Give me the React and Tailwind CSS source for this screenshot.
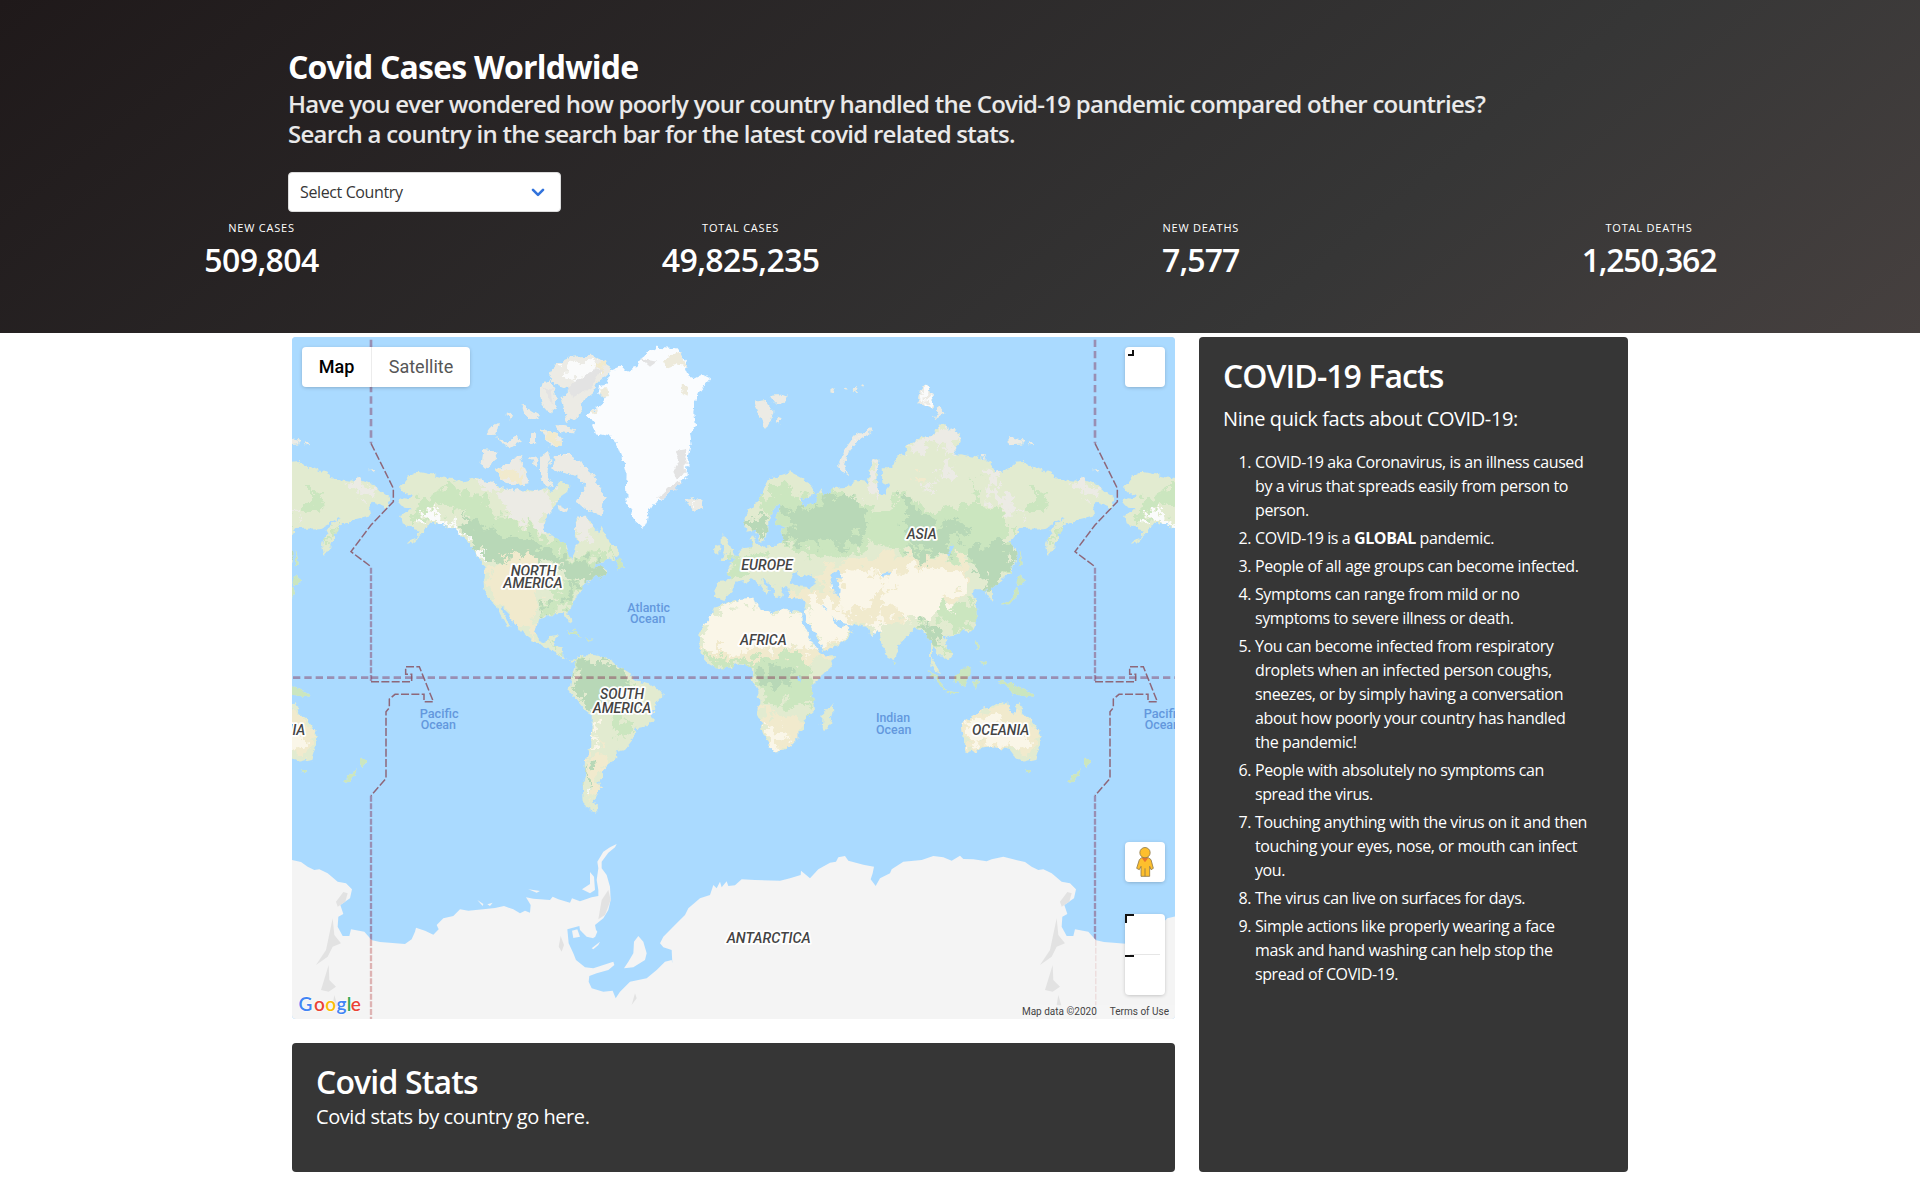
const shape = (dx, dy, list) =>
  list
    .split("|")
    .map(
      (ring) =>
        "M" +
        ring
          .trim()
          .split(/\s+/)
          .map((p) => {
            const [x, y] = p.split(",").map(Number);
            return `${x + dx},${y + dy}`;
          })
          .join("L") +
        "Z"
    )
    .join("");

const northAmerica = shape(
  0,
  0,
  `355,528 372,520 390,522 395,510 372,500 357,487 368,478 385,455 415,440 450,448 480,455 520,462 545,470 575,462 590,458 610,468 640,475 660,490 690,492 705,500 730,492 770,495 790,490 815,500 830,480 845,470 868,480 860,505 838,520 825,545 800,570 790,600 795,620 825,640 862,662 866,685 873,702 882,690 893,655 885,625 892,600 888,575 910,572 935,585 940,610 958,625 968,605 978,635 988,655 1010,665 1020,690 1005,700 975,708 950,715 935,728 965,722 985,738 960,760 945,752 925,770 905,785 898,815 880,832 870,850 862,862 872,880 875,898 866,895 855,868 830,868 800,868 778,885 768,915 775,945 790,952 805,945 812,932 830,930 828,950 820,965 845,970 848,995 865,1008 888,1005 905,1020 870,1010 845,1000 828,980 800,965 775,955 745,940 722,920 705,895 685,865 665,845 668,865 695,908 680,900 660,870 650,842 625,820 612,790 610,760 615,730 605,712 590,690 575,660 560,645 540,630 525,615 495,600 470,590 450,600 435,605 425,630 400,650 383,656 395,645 412,635 420,620 400,615 385,605 365,595 360,570 385,560 395,548 370,545`
);

const southAmerica = shape(
  0,
  1005,
  `888,0 900,-12 935,-15 975,-8 1000,5 1020,20 1050,40 1058,55 1075,65 1115,75 1145,95 1142,115 1120,140 1118,175 1105,198 1070,205 1055,245 1035,270 1010,275 1012,298 985,315 970,330 968,350 958,370 962,385 945,405 940,425 955,448 945,458 920,445 908,420 905,385 915,350 918,300 930,260 935,200 935,165 915,150 890,120 868,90 875,60 880,30`
);

const africa = shape(
  1350,
  0,
  `-10,830 30,822 70,818 75,835 105,855 125,865 150,852 180,858 205,860 216,860 218,890 235,930 255,965 272,990 295,992 315,990 310,1010 285,1045 250,1075 240,1085 252,1125 255,1155 220,1185 222,1210 205,1220 205,1240 170,1275 130,1280 118,1260 100,1220 95,1195 80,1165 88,1135 85,1100 65,1065 70,1040 60,1025 40,1020 20,1018 -10,1030 -40,1030 -70,1012 -85,995 -92,965 -88,915 -60,875 -40,845|308,1135 310,1165 295,1210 282,1218 272,1205 275,1170 290,1155`
);

const eurasia = shape(
  1350,
  0,
  `-42,768 0,765 5,755 -10,735 0,720 15,690 40,672 65,665 62,640 72,635 78,655 95,665 140,662 155,650 160,635 155,615 180,605 160,605 140,600 138,570 155,545 152,530 130,550 115,590 115,620 100,650 85,645 75,615 50,620 40,605 45,570 70,545 90,515 100,485 125,460 180,442 215,460 250,490 258,510 230,520 210,515 225,545 260,530 262,510 275,490 285,515 310,490 350,485 380,468 415,475 415,450 428,405 445,408 440,460 445,505 455,515 480,480 457,470 455,430 470,430 490,420 500,395 530,385 525,365 570,340 615,325 625,300 645,292 650,310 690,325 692,350 670,385 730,395 775,405 800,440 850,430 852,410 880,408 915,430 970,445 975,462 1030,470 1060,460 1100,475 1125,500 1155,520 1140,545 1100,530 1090,550 1095,570 1040,585 1000,600 985,640 970,675 955,695 948,660 960,620 1000,580 945,610 870,612 850,640 835,655 855,670 857,700 845,740 815,765 785,790 787,835 775,820 765,790 740,790 725,805 740,830 743,880 725,915 680,925 655,930 640,950 655,965 665,990 645,1005 625,985 607,960 605,1000 620,1020 630,1050 610,1030 600,1000 600,950 585,930 575,915 555,910 530,935 505,960 490,1005 475,1000 455,960 447,915 425,930 410,905 380,900 340,895 320,890 303,868 310,890 330,905 350,900 368,920 345,950 277,980 268,950 245,910 228,885 222,860 228,825 200,820 175,815 170,800 180,788 155,785 155,820 140,815 130,785 95,760 100,775 120,795 108,810 90,780 65,760 45,770 20,775 5,800 -20,825 -45,815|-25,620 -10,640 0,665 15,690 0,705 -28,705 -15,680 -25,655|-48,665 -32,660 -32,688 -47,690`
);

const innerSeas = shape(
  1350,
  0,
  `180,770 195,740 215,757 240,745 262,775 235,786 200,784|300,750 330,738 338,752 318,768 332,790 330,818 312,808 308,780|455,745 480,738 478,748 460,754|648,690 668,655 672,665 655,690|275,838 292,855 286,858|198,1058 212,1055 208,1070`
);

const arcticIslands = shape(
  0,
  0,
  `805,150 830,115 880,95 940,92 990,125 985,145 950,175 940,200 900,235 905,265 880,285 860,290 850,240 845,215 870,195 850,185 820,175|790,175 810,165 825,210 830,250 810,265 785,235 780,200|605,420 610,375 650,380 655,400 620,430|645,435 690,410 720,390 730,420 740,440 745,475 700,480 665,465|820,430 825,390 870,390 895,410 940,450 960,490 980,515 970,535 965,570 920,555 890,530 905,505 920,480 890,455 840,440|780,400 805,380 812,400 800,450 820,480 800,488 780,450|750,390 775,400 765,430|750,325 768,325 768,355 750,350|645,340 680,350 710,330 720,350 690,370|620,325 640,300 660,295 640,330|725,240 755,260 780,275 760,285 735,270|830,300 885,310 880,325 835,320|680,268 697,263 690,290|780,310 830,325 845,340 845,365 805,360|835,540 865,550 860,560 840,555|1215,525 1240,520 1270,525 1268,545 1245,560 1225,545`
);

const northernIslands = shape(
  1350,
  0,
  `75,230 110,225 130,260 120,290 108,312 95,280 85,265|120,210 145,208 170,215 160,235 130,235|140,275 155,280 150,295 138,290|298,206 317,188 310,204|338,182 356,190 345,195|368,200 382,188 380,200|392,182 400,176 402,190|325,430 345,370 370,335 420,312 425,320 380,350 352,385 345,420 353,445|570,195 585,175 600,195 610,235 608,255 580,240 565,225|625,240 643,262 613,280|838,335 880,345 880,358 840,360|895,350 915,358 900,362|1090,437 1108,435 1100,443|755,390 770,390 765,402`
);

const smallIslands = shape(
  0,
  0,
  `860,915 895,925 905,935 875,925|915,938 942,942 925,947|1010,705 1020,698 1035,725 1008,730`
) + shape(
  1350,
  0,
  `870,675 878,715 866,728|862,750 885,768 868,782 860,772|862,790 862,820 840,838 812,838 845,820 855,790|738,945 746,960 740,975|755,1005 770,1010 765,1022|490,1008 500,1010 497,1020|590,1030 632,1068 652,1095 628,1080|650,1098 690,1103 688,1107 655,1103|670,1050 700,1035 715,1020 722,1035 720,1050 705,1083 675,1070|730,1072 748,1062 740,1090 732,1090|805,1065 850,1078 895,1098 912,1118 880,1113 845,1105 835,1085 810,1077|885,1330 900,1330 893,1347|1062,1298 1083,1308 1068,1330 1062,1315|1055,1333 1045,1350 1025,1373 1016,1367 1040,1340`
);

const australia = shape(
  1350,
  1005,
  `695,190 735,165 755,145 785,140 810,125 832,130 835,150 855,165 865,125 880,155 905,180 935,225 930,255 915,300 880,308 855,290 840,270 790,258 750,268 720,278 703,275 700,225`
);

const greenland = shape(
  0,
  0,
  `920,270 965,240 975,210 955,205 960,180 985,175 985,140 1020,125 1045,140 1075,120 1090,90 1130,65 1190,70 1220,110 1215,130 1230,165 1265,148 1290,160 1270,185 1250,210 1240,260 1245,305 1230,325 1235,360 1225,400 1220,440 1220,460 1185,490 1150,520 1125,530 1105,565 1100,595 1085,603 1060,580 1040,530 1038,480 1040,450 1030,410 1015,370 995,335 945,325 935,300 950,290 925,280`
);

const antarctica = shape(
  0,
  1005,
  `273,840 300,846 375,852 395,838 405,815 408,803 435,812 460,824 476,808 470,795 490,775 520,768 540,748 565,752 610,748 645,744 672,738 700,748 720,760 735,752 750,758 752,735 738,712 760,716 810,720 818,710 835,718 870,728 876,715 900,724 935,712 955,708 955,690 950,660 955,625 952,605 970,575 990,562 1010,552 1005,562 985,578 965,605 965,625 980,645 990,680 992,720 985,750 970,775 945,795 950,820 940,835 920,830 900,810 898,798 862,808 866,850 880,880 888,900 915,922 940,925 970,915 1000,905 1003,915 985,930 950,940 928,948 926,965 935,985 970,995 998,992 1007,1015 1020,995 1050,965 1100,955 1130,930 1155,905 1175,900 1177,910 1175,870 1150,862 1140,850 1150,830 1190,790 1215,765 1225,745 1260,715 1290,705 1300,675 1310,685 1320,665 1325,682 1340,664 1345,678 1365,676 1385,658 1425,660 1500,662 1530,655 1562,645 1563,632 1590,655 1615,628 1650,608 1668,605 1675,592 1695,588 1705,602 1750,614 1782,620 1778,640 1772,658 1787,678 1800,655 1830,640 1835,628 1870,605 1925,600 1960,588 1990,592 2015,602 2040,587 2050,597 2080,598 2120,604 2135,598 2170,590 2200,598 2235,606 2255,620 2275,630 2290,628 2315,640 2345,665 2370,670 2388,688 2382,715 2353,735 2362,762 2347,770 2345,800 2360,828 2380,828 2385,808 2425,815 2447,840 2447,1120 271,1120 271,840|1075,828 1090,845 1100,880 1095,900 1060,922 1032,925 1045,905 1060,880 1062,845|930,636 942,650 945,690 930,700 906,688 930,672|876,812 892,808 900,830 880,834|900,800 940,798 952,815 945,832 925,832|935,865 960,845 955,855 940,868|745,688 780,693 770,698|592,720 610,732 608,738|622,733 638,728 630,738`
);

const antarcticRelief = shape(
  0,
  1005,
  `2362,696 2375,700 2368,725 2345,740 2340,725|2330,775 2335,825 2355,850 2330,860 2315,890 2280,915 2310,870|2318,915 2320,960 2340,980 2318,995 2295,990|2335,1005 2345,1040 2330,1035|965,720 985,690 992,720 975,765 955,778|842,828 852,855 845,875 836,860|1065,1000 1070,1015 1055,1035`
);

const tundra = shape(
  0,
  0,
  `660,492 730,488 815,500 840,518 800,570 790,620 740,605 700,580 670,545|885,570 935,580 945,640 900,660|525,530 580,535 605,575 590,600 550,570|820,385 900,400 980,515 965,570 900,530 920,480 830,440|580,460 640,472 665,490 640,505 600,490`
) + shape(1350, 0, `525,370 615,325 645,290 695,325 690,352 660,385 625,355 570,388|610,430 665,415 675,445 620,475|780,440 805,440 790,490 830,525 870,550 885,590 850,560 790,540 770,500|1030,470 1060,460 1105,480 1100,530 1060,500|425,400 448,405 440,520 420,495|580,500 615,475 605,515|320,440 420,310 430,320 350,450`);

const midGreen = shape(
  0,
  0,
  `395,555 455,500 520,485 600,520 650,560 740,610 830,650 870,700 960,690 1020,675 1000,705 900,745 830,720 700,650 600,620 540,560 460,545 400,600|780,850 850,770 900,770 890,830 800,870|800,935 830,965 860,1005 820,975|890,995 1050,1040 1060,1100 900,1130|985,1170 1060,1200 1070,1240 1000,1230`
) + shape(
  1350,
  0,
  `90,520 150,480 230,510 320,500 450,560 520,500 600,560 720,540 830,560 840,610 840,740 780,770 720,700 540,690 430,650 360,690 200,680 120,600|0,700 60,670 120,690 60,740 10,750|620,840 740,830 745,880 690,920 640,890|570,890 640,950 660,1000 600,960|-80,990 60,1010 200,980 250,1060 250,1150 100,1130 60,1030 -40,1030|740,470 760,540 730,540|900,490 960,520 930,560 900,540|950,640 990,600 975,670`
);

const darkGreen = shape(
  0,
  0,
  `535,580 610,590 650,620 720,650 790,660 860,710 950,705 985,740 900,770 840,730 720,680 690,690 640,720 600,680 560,630|785,840 805,835 800,865|840,820 890,770 895,790 850,840|905,1010 960,1000 1000,1020 1050,1045 1055,1075 990,1110 940,1160 890,1120 880,1070|920,1310 932,1310 928,1370 912,1390`
) + shape(
  1350,
  0,
  `140,540 230,550 300,520 370,515 390,560 415,590 380,620 400,650 370,670 300,650 200,655 150,630 200,600|525,500 550,540 600,580 700,600 720,620 660,640 660,690 620,690 540,640 525,570|730,660 840,655 855,700 820,750 770,800 760,760 720,710|70,1030 200,1020 200,1060 100,1090|575,880 620,920 640,960 600,950|680,1040 715,1025 705,1060 685,1070|50,590 80,560 110,590 90,640|840,1085 890,1095 880,1108|530,660 600,680 590,710 540,690`
);

const tan = shape(
  0,
  0,
  `620,740 700,670 780,690 770,880 760,940 720,910 640,830|650,430 730,440 720,475 660,465|780,310 850,330 840,365 800,360|955,1260 970,1265 985,1300 950,1400 925,1440 930,1320|925,140 980,110 970,150|950,190 990,190 985,215`
) + shape(
  1350,
  0,
  `270,740 330,710 480,685 560,700 700,700 720,770 660,830 540,880 420,900 290,880 170,815 180,790 290,800|-90,960 60,960 290,975 300,1000 60,1010 -60,1000|85,1140 180,1180 240,1180 180,1280 120,1280|690,1200 760,1150 830,1140 870,1160 935,1230 900,1290 850,1280 700,1270|550,450 590,450 590,490 560,480|225,820 350,890 350,950 280,980`
);

const desert = shape(
  1350,
  0,
  `-90,930 -50,870 0,828 70,818 120,860 220,860 240,930 265,985 200,965 60,960 30,990 -20,975 -80,975|232,825 290,820 360,890 365,920 280,975 225,880|320,750 400,730 450,760 440,830 400,860 330,850|470,800 540,770 540,720 620,740 690,745 710,790 640,810 650,850 600,880 520,880 470,840|450,760 540,730 560,770 470,790|410,890 460,860 440,920|100,1200 160,1210 170,1250 130,1275|700,1200 790,1165 850,1200 900,1240 870,1285 800,1255 720,1265`
) + shape(0, 1005, `935,165 950,180 945,250 930,260|700,1070 705,1075 702,1078`);

const snow = shape(
  0,
  0,
  `430,575 465,555 500,590 545,610 575,640 560,640 520,615 470,585 435,598|600,670 615,690 605,705|850,345 875,345 870,368 848,365|845,130 930,105 960,130 880,170|915,1380 922,1380 920,1420 912,1415|1230,530 1255,525 1250,545`
) + shape(1350, 0, `570,190 590,180 600,240 585,235|350,370 410,318 380,345`);

const relief = shape(
  0,
  0,
  `1185,375 1215,370 1218,440 1190,460 1180,440 1195,410|860,190 930,140 970,130 930,190 880,220|790,190 815,190 820,240|1130,520 1190,470 1210,470 1150,520|1080,100 1130,110 1110,125`
);

const greenlandCoast = shape(0, 0, `1165,95 1205,85 1220,125 1190,118 1160,130 1150,120|960,190 985,190 990,210 965,212|930,262 955,250 945,268|1205,180 1225,180 1220,215 1210,210`);

const continents = northAmerica + southAmerica + africa + eurasia + arcticIslands + northernIslands + smallIslands + australia;

const labels = [
  { t: "NORTH", x: 692, y: 752, w: 138 },
  { t: "AMERICA", x: 670, y: 790, w: 178 },
  { t: "SOUTH", x: 960, y: 1121, w: 132 },
  { t: "AMERICA", x: 938, y: 1163, w: 176 },
  { t: "EUROPE", x: 1384, y: 736, w: 154 },
  { t: "ASIA", x: 1880, y: 643, w: 90 },
  { t: "AFRICA", x: 1380, y: 960, w: 140 },
  { t: "OCEANIA", x: 2076, y: 1231, w: 172 },
  { t: "ANTARCTICA", x: 1340, y: 1855, w: 252 },
];

const seas = [
  { t: "Atlantic", x: 1042, y: 861, w: 128 },
  { t: "Ocean", x: 1050, y: 894, w: 106 },
  { t: "Pacific", x: 419, y: 1180, w: 117 },
  { t: "Ocean", x: 422, y: 1213, w: 106 },
  { t: "Indian", x: 1788, y: 1192, w: 102 },
  { t: "Ocean", x: 1788, y: 1226, w: 106 },
];

function WorldMap() {
  return (
    <svg className="block h-full w-full" viewBox="36 36 2649 2046" aria-label="World map">
      <defs>
        <filter id="coast" x="0" y="0" width="2500" height="2100" filterUnits="userSpaceOnUse">
          <feTurbulence type="fractalNoise" baseFrequency="0.05" numOctaves="3" seed="4" result="n" />
          <feDisplacementMap in="SourceGraphic" in2="n" scale="22" xChannelSelector="R" yChannelSelector="G" />
        </filter>
        <filter id="patch" x="0" y="0" width="2500" height="2100" filterUnits="userSpaceOnUse">
          <feTurbulence type="fractalNoise" baseFrequency="0.03" numOctaves="4" seed="9" result="n" />
          <feDisplacementMap in="SourceGraphic" in2="n" scale="90" xChannelSelector="R" yChannelSelector="G" />
        </filter>
        <clipPath id="land">
          <path d={continents} />
        </clipPath>
        <g id="world">
          <g filter="url(#coast)">
            <path d={continents} fill="#e2ebd0" />
            <path d={arcticIslands + northernIslands} fill="#ecebe5" />
            <g clipPath="url(#land)">
              <g filter="url(#patch)">
                <path d={tan} fill="#f1eacd" />
                <path d={tundra} fill="#ecebe5" />
                <path d={midGreen} fill="#cbe6bf" />
                <path d={darkGreen} fill="#b8d8b7" />
                <path d={desert} fill="#faf6e8" />
                <path d={snow} fill="#fafbfb" />
              </g>
            </g>
            <path d={smallIslands} fill="#cbe6bf" />
            <path d={innerSeas} fill="#aadaff" />
            <path d={greenland} fill="#fafcfe" />
            <path d={greenlandCoast} fill="#edeadb" />
            <path d={relief} fill="#e3e3e3" />
          </g>
          <path d={antarctica} fill="#f4f4f4" />
          <path d={antarcticRelief} fill="#e2e2e2" />
          <g fill="none" stroke="#83284a" strokeOpacity="0.42">
            <path d="M273,36V355" strokeWidth="8" strokeDasharray="22 12" strokeDashoffset="-8" />
            <path d="M273,728V1068" strokeWidth="7" strokeDasharray="18 5" />
            <path d="M273,1412V1845" strokeWidth="7" strokeDasharray="18 5" />
            <path d="M273,1845V2082" strokeWidth="7" strokeDasharray="18 5" stroke="#b53a3a" strokeOpacity="0.35" />
            <path d="M273,1058H2445" strokeWidth="8" strokeDasharray="22 12" />
          </g>
          <path
            d="M273,355L340,490V530L273,600L213,680L273,725M273,1070H395V1048H377V1025H418L460,1130H432V1108H345L328,1122V1148L318,1160V1360L273,1412"
            fill="none"
            stroke="#8a5262"
            strokeOpacity="0.85"
            strokeWidth="4.500"
            strokeDasharray="24 7"
          />
          <g
            fill="#444"
            stroke="#fff"
            strokeWidth="11"
            strokeLinejoin="round"
            className="[font-family:Roboto,sans-serif] text-[43px] font-medium italic [paint-order:stroke]"
          >
            {labels.map((l, i) => (
              <text key={i} x={l.x} y={l.y} textLength={l.w} lengthAdjust="spacingAndGlyphs">
                {l.t}
              </text>
            ))}
          </g>
          <g fill="#6398dd" className="[font-family:Roboto,sans-serif] text-[37px] font-medium">
            {seas.map((l, i) => (
              <text key={i} x={l.x} y={l.y} textLength={l.w} lengthAdjust="spacingAndGlyphs">
                {l.t}
              </text>
            ))}
          </g>
        </g>
      </defs>
      <rect x="36" y="36" width="2649" height="2046" fill="#aadaff" />
      <use href="#world" x="-2172" />
      <use href="#world" x="2172" />
      <use href="#world" />
    </svg>
  );
}

function Pegman() {
  return (
    <svg className="h-[30px] w-[18px]" viewBox="0 0 54 90">
      <path
        d="M17 32H37L45 38L52 64L45 68L41 58V88H15V58L10 68L2 64L10 38Z"
        fill="#fdbf2d"
        stroke="#8f7a4a"
        strokeWidth="2.500"
      />
      <path d="M17 32H37L27 46Z" fill="#e8762d" />
      <path d="M27 64V88" stroke="#8f7a4a" strokeWidth="2.500" />
      <circle cx="27" cy="17" r="15.500" fill="#fdbf2d" stroke="#8f7a4a" strokeWidth="2.500" />
    </svg>
  );
}

const facts = [
  ["COVID-19 aka Coronavirus, is an illness caused", "by a virus that spreads easily from person to", "person."],
  [<>COVID-19 is a <strong className="font-bold">GLOBAL</strong> pandemic.</>],
  ["People of all age groups can become infected."],
  ["Symptoms can range from mild or no", "symptoms to severe illness or death."],
  [
    "You can become infected from respiratory",
    "droplets when an infected person coughs,",
    "sneezes, or by simply having a conversation",
    "about how poorly your country has handled",
    "the pandemic!",
  ],
  ["People with absolutely no symptoms can", "spread the virus."],
  ["Touching anything with the virus on it and then", "touching your eyes, nose, or mouth can infect", "you."],
  ["The virus can live on surfaces for days."],
  ["Simple actions like properly wearing a face", "mask and hand washing can help stop the", "spread of COVID-19."],
];

const stats = [
  { label: "New Cases", value: "509,804", width: "w-[115px]", tracking: "tracking-[-0.55px]" },
  { label: "Total Cases", value: "49,825,235", width: "w-[158px]", tracking: "tracking-[-0.6px]" },
  { label: "New Deaths", value: "7,577", width: "w-[77px]", tracking: "tracking-[-0.9px]" },
  { label: "Total Deaths", value: "1,250,362", width: "w-[134px]", tracking: "tracking-[-1.2px]" },
];

const logo = [
  ["G", "#4285f4", 1.5],
  ["o", "#ea4335", 17],
  ["o", "#fbbc05", 28.3],
  ["g", "#4285f4", 39.6],
  ["l", "#34a853", 49.8],
  ["e", "#ea4335", 53.8],
];

export default function App() {
  return (
    <div className="min-h-[1184px] w-[1920px] bg-white [font-family:'Open_Sans',sans-serif]">
      <header className="h-[333px] bg-[linear-gradient(141deg,#1f191a_0%,#363636_71%,#46403f_100%)] pt-[49px] text-white">
        <div className="mx-auto w-[1344px] whitespace-nowrap">
          <h1 className="text-[32px] font-bold leading-9 tracking-[-0.8px]">Covid Cases Worldwide</h1>
          <p className="mt-1 text-2xl font-semibold leading-[30px] tracking-[-0.73px] text-white/90">
            Have you ever wondered how poorly your country handled the Covid-19 pandemic compared other countries?
            <br />
            Search a country in the search bar for the latest covid related stats.
          </p>
          <button className="mt-[23px] flex h-10 w-[273px] items-center justify-between rounded border border-[#dbdbdb] bg-white pl-[11px] pr-[15px] text-base tracking-[-0.38px] text-[#363636]">
            Select Country
            <svg className="h-[9px] w-[14px]" viewBox="0 0 14 9" fill="none" stroke="#3273dc" strokeWidth="2.600" strokeLinecap="round" strokeLinejoin="round">
              <path d="M2 1.800L7 6.800L12 1.800" />
            </svg>
          </button>
        </div>
        <div className="mt-[7px] flex justify-between whitespace-nowrap px-[204px]">
          {stats.map((s) => (
            <div key={s.label} className={`flex flex-col items-center ${s.width}`}>
              <p className="text-[11px] uppercase leading-[17px] tracking-[0.8px]">{s.label}</p>
              <p className={`mt-1.5 text-[32px] font-semibold leading-9 ${s.tracking}`}>{s.value}</p>
            </div>
          ))}
        </div>
      </header>

      <main className="mx-auto mt-1 flex w-[1336px] gap-6">
        <div className="flex w-[883px] flex-col gap-6">
          <section className="relative h-[682px] overflow-hidden rounded bg-[#aadaff] [font-family:Roboto,sans-serif]">
            <WorldMap />
            <div className="absolute left-[10px] top-[10px] flex h-10 rounded-sm bg-white text-lg leading-10 shadow-[0_1px_4px_-1px_rgba(0,0,0,0.3)]">
              <span className="w-[70px] border-r border-[#ececec] text-center font-medium text-black">Map</span>
              <span className="w-[98px] text-center text-[#565656]">Satellite</span>
            </div>
            <div className="absolute right-[10px] top-[10px] h-10 w-10 rounded-sm bg-white pl-[3px] pt-[3px] shadow-[0_1px_4px_-1px_rgba(0,0,0,0.3)]">
              <div className="h-[6px] w-[6px] border-b-2 border-r-2 border-[#111]" />
            </div>
            <div className="absolute right-[10px] top-[505px] flex h-10 w-10 items-center justify-center rounded-sm bg-white pr-px shadow-[0_1px_4px_-1px_rgba(0,0,0,0.3)]">
              <Pegman />
            </div>
            <div className="absolute right-[10px] top-[577px] flex h-[81px] w-10 flex-col rounded-sm bg-white shadow-[0_1px_4px_-1px_rgba(0,0,0,0.3)]">
              <div className="h-[9px] w-[9px] border-l-2 border-t-2 border-[#111]" />
              <div className="mx-[5px] mt-[31px] h-px bg-[#e6e6e6]" />
              <div className="h-[2px] w-[9px] bg-[#111]" />
            </div>
            <svg className="absolute bottom-0 left-[5px] h-[30px] w-[70px] overflow-visible" viewBox="0 0 70 30">
              <g
                stroke="#fff"
                strokeWidth="1.500"
                strokeOpacity="0.7"
                className="[font-family:Lato,sans-serif] text-[19px] font-semibold [paint-order:stroke]"
              >
                {logo.map(([ch, color, x], i) => (
                  <text key={i} x={x} y="21.500" fill={color}>
                    {ch}
                  </text>
                ))}
              </g>
            </svg>
            <div className="absolute bottom-0 right-0 flex h-[14px] gap-[13px] bg-[#f5f5f5]/70 pr-[6px] text-[10px] leading-[14px] text-[#444]">
              <span>Map data ©2020</span>
              <span>Terms of Use</span>
            </div>
          </section>
          <section className="h-[129px] rounded bg-[#363636] px-6 pt-[21px] text-white">
            <h2 className="text-[32px] font-semibold leading-9 tracking-[-0.85px]">Covid Stats</h2>
            <p className="mt-1 text-xl leading-[25px] tracking-[-0.44px]">Covid stats by country go here.</p>
          </section>
        </div>
        <section className="h-[835px] w-[429px] whitespace-nowrap rounded bg-[#363636] px-6 pt-[21px] text-white">
          <h2 className="text-[32px] font-semibold leading-9 tracking-[-0.95px]">COVID-19 Facts</h2>
          <p className="mt-3 text-xl leading-[25px] tracking-[-0.4px]">Nine quick facts about COVID-19:</p>
          <ol className="mt-[19px] flex flex-col gap-1 text-base leading-6 tracking-[-0.4px]">
            {facts.map((lines, i) => (
              <li key={i} className="flex">
                <div className="w-[28px] shrink-0 text-right">{i + 1}.</div>
                <div className="ml-1">
                  {lines.map((line, j) => (
                    <div key={j}>{line}</div>
                  ))}
                </div>
              </li>
            ))}
          </ol>
        </section>
      </main>
    </div>
  );
}
